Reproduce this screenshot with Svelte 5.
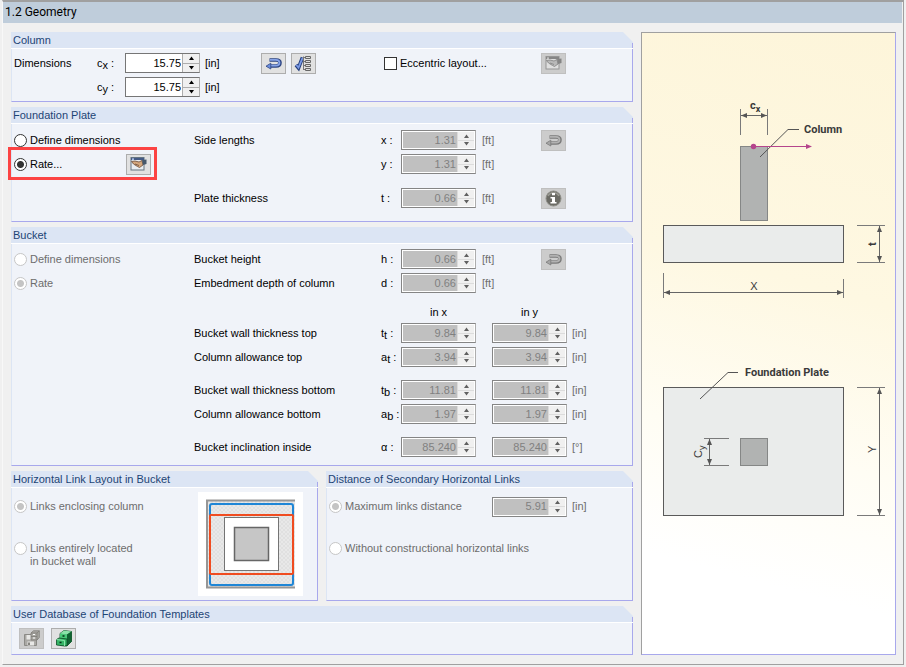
<script>
  let values = $state({
    cx: '15.75', cy: '15.75',
    x: '1.31', y: '1.31', t: '0.66',
    h: '0.66', d: '0.66',
    ttx: '9.84', tty: '9.84',
    atx: '3.94', aty: '3.94',
    tbx: '11.81', tby: '11.81',
    abx: '1.97', aby: '1.97',
    ax: '85.240', ay: '85.240',
    dist: '5.91'
  });
  let plateMode = $state('rate');
  let eccentric = $state(false);

  const wallRows = [
    [
      { label: 'Bucket wall thickness top', base: 't', sub: 't', unit: '[in]', keys: ['ttx', 'tty'] },
      { label: 'Column allowance top', base: 'a', sub: 't', unit: '[in]', keys: ['atx', 'aty'] }
    ],
    [
      { label: 'Bucket wall thickness bottom', base: 't', sub: 'b', unit: '[in]', keys: ['tbx', 'tby'] },
      { label: 'Column allowance bottom', base: 'a', sub: 'b', unit: '[in]', keys: ['abx', 'aby'] }
    ],
    [
      { label: 'Bucket inclination inside', base: 'α', sub: '', unit: '[°]', keys: ['ax', 'ay'] }
    ]
  ];

  function step(key, delta) {
    const decimals = values[key].split('.')[1]?.length ?? 0;
    values[key] = (parseFloat(values[key]) + delta).toFixed(decimals);
  }
</script>

{#snippet spin(key, name, disabled = false)}
  <div class="spin" class:disabled>
    <input id={key} type="text" inputmode="decimal" aria-label={name} bind:value={values[key]} {disabled} />
    <div class="arrows">
      <button type="button" aria-label="Increase {name}" {disabled} onclick={() => step(key, 0.01)}>
        <svg width="7" height="4" viewBox="0 0 7 4"><path d="M1 4L3.500 .5L6 4Z" fill="currentColor" /></svg>
      </button>
      <button type="button" aria-label="Decrease {name}" {disabled} onclick={() => step(key, -0.01)}>
        <svg width="7" height="4" viewBox="0 0 7 4"><path d="M1 0L3.500 3.500L6 0Z" fill="currentColor" /></svg>
      </button>
    </div>
  </div>
{/snippet}

{#snippet symbol(key, base, sub = '')}
  <label class="symbol" for={key}>{base}{#if sub}<sub>{sub}</sub>{/if} :</label>
{/snippet}

{#snippet pickIcon()}
  <svg width="17" height="13" viewBox="0 0 17 13" fill="none">
    <path d="M4.500 3H11C14 3 15 4.300 15 5.800C15 7.800 13.500 9 11 9H5" stroke="#2c4480" stroke-width="3.600" />
    <path d="M5 2.800H11C13.500 2.800 14.500 4.200 14.500 5.700C14.500 7.500 13 8.600 11 8.600H5" stroke="#86a3e8" stroke-width="1.800" />
    <path d="M5.800 6.200V12L1 9.200Z" fill="#6d8fdf" stroke="#2c4480" stroke-width=".8" />
  </svg>
{/snippet}

{#snippet treeIcon()}
  <svg width="19" height="17" viewBox="0 0 19 17" fill="none">
    <path d="M2 10L4.500 13L8.500 2.500" stroke="#26407e" stroke-width="3.600" />
    <path d="M2.300 10L4.500 12.500L8.500 3" stroke="#7b9ae6" stroke-width="1.800" />
    <path d="M9.500 1.500V15M9.500 2.500H12M9.500 6.500H12M9.500 10.500H12M9.500 14.500H12" stroke="#777" />
    <path d="M11.500 1.500h5v2h-5zM11.500 5.500h5v2h-5zM11.500 9.500h5v2h-5zM11.500 13.500h5v2h-5z" fill="#ddd" stroke="#666" />
  </svg>
{/snippet}

{#snippet handIcon()}
  <svg width="17" height="14" viewBox="0 0 17 14">
    <rect x="1" y=".5" width="13" height="12.500" fill="#e9edf0" stroke="#657481" />
    <path d="M1 1H14V3H1Z" fill="#445a85" />
    <path d="M2 1.500H4V2.800H2Z" fill="#cbdcff" />
    <path d="M1.500 4.500L5 4L9 5L12 3.500L13 8L9.500 10.500L7.500 9.500L3.500 7Z" fill="#d4a77c" stroke="#6b4b37" stroke-width=".8" />
    <path d="M5 7L9 8.500" stroke="#6b4b37" stroke-width=".8" fill="none" />
    <path d="M12 3L16.500 2.500V7L13 8Z" fill="#46586b" />
  </svg>
{/snippet}

{#snippet infoIcon()}
  <svg class="solid" width="17" height="17" viewBox="0 0 17 17">
    <circle cx="8.500" cy="8.500" r="7.500" fill="#6b6b65" stroke="#8f8f89" />
    <path d="M3 6C5 1.500 12 1.500 14 6" fill="none" stroke="#9b9b94" stroke-width="1.500" />
    <path d="M7 3H10V5.300H7ZM5.500 7H10V12H11.500V13.500H5.500V12H7V8.500H5.500Z" fill="#fff" />
  </svg>
{/snippet}

{#snippet saveIcon()}
  <svg class="solid" width="17" height="17" viewBox="0 0 17 17">
    <path d="M1.500 4.500H12L13.500 6V15.500H1.500Z" fill="#aaa9a5" stroke="#8b8a86" />
    <path d="M3.500 5H11V9.500H3.500ZM4.500 11.500H11V15.500H4.500Z" fill="#e8e8e6" />
    <path d="M5 12.500H7V15H5Z" fill="#85847f" />
    <path d="M8 3L10.500 .8H16.300V7.500L14 10H8Z" fill="#a9a8a3" stroke="#7d7c77" stroke-width=".8" />
    <path d="M8 3H14V10M14 3L16.300 .8M8 6.500H14" fill="none" stroke="#7d7c77" stroke-width=".8" />
    <path d="M10 4.500H12M10 8H12" stroke="#fff" />
  </svg>
{/snippet}

{#snippet cabinetIcon()}
  <svg width="18" height="17" viewBox="0 0 18 17">
    <path d="M5 3.500L9 .5L16.500 1.500V11.500L12 16L5 15Z" fill="#1f8f4c" stroke="#0b4a23" stroke-width=".8" />
    <path d="M5 3.500L12 4.500V9L5 8.500Z" fill="#48c978" />
    <path d="M5 3.500L9 .5L16.500 1.500L12 4.500Z" fill="#8be3a9" />
    <path d="M12 4.500L16.500 1.500V11.500L12 16Z" fill="#116332" />
    <path d="M1.500 9.500L4 8L12 9V15.500L9.500 16L1.500 15Z" fill="#36b566" stroke="#0b4a23" stroke-width=".8" />
    <path d="M1.500 9.500L9.500 10.500V16" fill="none" stroke="#9df0ba" stroke-width=".8" />
    <path d="M7.500 6H9.500M4.500 12.500H6.500" stroke="#052d14" stroke-width="1.500" />
  </svg>
{/snippet}

<main class="window">
  <h1>1.2 Geometry</h1>
  <div class="content">
    <div class="groups">
      <section class="group">
        <h2>Column</h2>
        <div class="body column-body">
          <div class="row">
            <span class="dim">Dimensions</span>
            {@render symbol('cx', 'c', 'x')}
            {@render spin('cx', 'column width in x')}
            <span class="unit">[in]</span>
            <div class="tools">
              <button class="tool" type="button" aria-label="Pick dimensions">{@render pickIcon()}</button>
              <button class="tool" type="button" aria-label="Select from list">{@render treeIcon()}</button>
            </div>
            <label class="choice ecc"><input type="checkbox" bind:checked={eccentric} />Eccentric layout...</label>
            <button class="tool" type="button" aria-label="Edit eccentric layout" disabled={!eccentric}>{@render handIcon()}</button>
          </div>
          <div class="row">
            <span class="dim"></span>
            {@render symbol('cy', 'c', 'y')}
            {@render spin('cy', 'column width in y')}
            <span class="unit">[in]</span>
          </div>
        </div>
      </section>

      <section class="group">
        <h2>Foundation Plate</h2>
        <div class="body split plate-body">
          <div class="options">
            <div class="row"><label class="choice"><input type="radio" name="plate" value="define" bind:group={plateMode} />Define dimensions</label></div>
            <div class="row marked">
              <label class="choice"><input type="radio" name="plate" value="rate" bind:group={plateMode} />Rate...</label>
              <button class="tool" type="button" aria-label="Edit rating settings">{@render handIcon()}</button>
            </div>
          </div>
          <div class="fields">
            <div class="stack">
              <div class="row">
                <span class="name">Side lengths</span>
                {@render symbol('x', 'x')}
                {@render spin('x', 'side length x', true)}
                <span class="unit off">[ft]</span>
                <button class="tool" type="button" aria-label="Pick side lengths" disabled>{@render pickIcon()}</button>
              </div>
              <div class="row">
                <span class="name"></span>
                {@render symbol('y', 'y')}
                {@render spin('y', 'side length y', true)}
                <span class="unit off">[ft]</span>
              </div>
            </div>
            <div class="stack">
              <div class="row">
                <span class="name">Plate thickness</span>
                {@render symbol('t', 't')}
                {@render spin('t', 'plate thickness', true)}
                <span class="unit off">[ft]</span>
                <button class="tool" type="button" aria-label="Plate information" disabled>{@render infoIcon()}</button>
              </div>
            </div>
          </div>
        </div>
      </section>

      <section class="group">
        <h2>Bucket</h2>
        <div class="body split bucket-body">
          <div class="options">
            <div class="row"><label class="choice"><input type="radio" name="bucket" disabled />Define dimensions</label></div>
            <div class="row"><label class="choice"><input type="radio" name="bucket" checked disabled />Rate</label></div>
          </div>
          <div class="fields">
            <div class="stack">
              <div class="row">
                <span class="name">Bucket height</span>
                {@render symbol('h', 'h')}
                {@render spin('h', 'bucket height', true)}
                <span class="unit off">[ft]</span>
                <button class="tool" type="button" aria-label="Pick bucket height" disabled>{@render pickIcon()}</button>
              </div>
              <div class="row">
                <span class="name">Embedment depth of column</span>
                {@render symbol('d', 'd')}
                {@render spin('d', 'embedment depth', true)}
                <span class="unit off">[ft]</span>
              </div>
            </div>
            {#each wallRows as rows, i}
              <div class="stack">
                {#if i === 0}
                  <div class="row heads">
                    <span class="name"></span>
                    <span class="head">in x</span>
                    <span class="head">in y</span>
                  </div>
                {/if}
                {#each rows as row}
                  <div class="row">
                    <span class="name">{row.label}</span>
                    {@render symbol(row.keys[0], row.base, row.sub)}
                    <div class="pair">
                      {@render spin(row.keys[0], row.label + ' in x', true)}
                      {@render spin(row.keys[1], row.label + ' in y', true)}
                    </div>
                    <span class="unit off">{row.unit}</span>
                  </div>
                {/each}
              </div>
            {/each}
          </div>
        </div>
      </section>

      <div class="halves">
        <section class="group">
          <h2>Horizontal Link Layout in Bucket</h2>
          <div class="body link-body">
            <div class="link-options">
              <label class="choice"><input type="radio" name="layout" checked disabled />Links enclosing column</label>
              <label class="choice"><input type="radio" name="layout" disabled /><span>Links entirely located<br />in bucket wall</span></label>
            </div>
            <svg class="links" width="105" height="104" viewBox="0 0 105 104" fill="none" role="img" aria-label="Links enclosing the column">
              <defs>
                <pattern id="hatch" width="4" height="4" patternUnits="userSpaceOnUse">
                  <rect width="4" height="4" fill="#e8e8e8" />
                  <path d="M0 0L4 4M4 0L0 4" stroke="#dcdcdc" stroke-width=".7" />
                </pattern>
              </defs>
              <rect width="105" height="104" fill="#fff" />
              <rect x="9" y="9" width="88" height="87" fill="url(#hatch)" />
              <path d="M97 8.500H9V95.500H97" stroke="#969696" stroke-width="2" />
              <rect x="12" y="12" width="83" height="81" rx="2" stroke="#1f86d6" stroke-width="2" />
              <rect x="12" y="23" width="83" height="59" rx="1" stroke="#f04c20" stroke-width="2" />
              <rect x="26.500" y="25.500" width="54" height="53" fill="#fff" stroke="#747474" />
              <rect x="36.500" y="35.500" width="34" height="33" fill="#c6c6c6" stroke="#666" stroke-width="1.500" />
            </svg>
          </div>
        </section>
        <section class="group">
          <h2>Distance of Secondary Horizontal Links</h2>
          <div class="body link-body">
            <div class="link-options">
              <div class="row">
                <label class="choice dist"><input type="radio" name="spacing" checked disabled />Maximum links distance</label>
                {@render spin('dist', 'maximum links distance', true)}
                <span class="unit off">[in]</span>
              </div>
              <label class="choice"><input type="radio" name="spacing" disabled />Without constructional horizontal links</label>
            </div>
          </div>
        </section>
      </div>

      <section class="group">
        <h2>User Database of Foundation Templates</h2>
        <div class="body db-body">
          <button class="tool" type="button" aria-label="Save template" disabled>{@render saveIcon()}</button>
          <button class="tool" type="button" aria-label="Open template database">{@render cabinetIcon()}</button>
        </div>
      </section>
    </div>

    <div class="preview">
      <svg viewBox="642 33 253 621" role="img" aria-label="Foundation sketch">
        <defs>
          <marker id="tip" viewBox="0 0 6 5" refX="6" refY="2.500" markerWidth="6" markerHeight="5" markerUnits="userSpaceOnUse" orient="auto-start-reverse">
            <path d="M0 0L6 2.500L0 5Z" fill="#555" />
          </marker>
        </defs>
        <g fill="none" stroke="#7a7a7a">
          <rect x="740.500" y="146.500" width="27" height="74" fill="#b1b3b2" stroke="#858786" />
          <rect x="663.500" y="225.500" width="180" height="37" fill="#eaeceb" stroke="#5a5a5a" />
          <rect x="663.500" y="387.500" width="180" height="128" fill="#eaeceb" stroke="#5a5a5a" />
          <rect x="740.500" y="438.500" width="27" height="27" fill="#b1b3b2" stroke="#858786" />
          <path d="M740.500 109V135M767.500 109V135M663.500 273V298M843.500 279V298" />
          <path d="M857 225.500H885M857 262.500H885M857 387.500H885M857 515.500H885M704 438.500H729M704 465.500H729" />
          <path d="M760 157L788 129.500H799M700 399L728 372.500H738" stroke="#555" />
        </g>
        <g stroke="#666">
          <path d="M741 115.500H767" marker-start="url(#tip)" marker-end="url(#tip)" />
          <path d="M664 292.500H843" marker-start="url(#tip)" marker-end="url(#tip)" />
          <path d="M879.500 226V262" marker-start="url(#tip)" marker-end="url(#tip)" />
          <path d="M879.500 388V515" marker-start="url(#tip)" marker-end="url(#tip)" />
          <path d="M709.500 439V465" marker-start="url(#tip)" marker-end="url(#tip)" />
        </g>
        <g fill="#b5458c">
          <path d="M754 146.500H807" stroke="#b5458c" />
          <circle cx="753.500" cy="146.500" r="2.700" />
          <path d="M806 144L812 146.500L806 149Z" />
        </g>
        <g class="marks">
          <text x="750" y="109">c<tspan dy="3" font-size="9">x</tspan></text>
          <text x="804" y="133">Column</text>
          <text x="745" y="376">Foundation Plate</text>
          <text x="754" y="290" text-anchor="middle" class="thin">X</text>
          <text transform="translate(876 246) rotate(-90)">t</text>
          <text transform="translate(876 453) rotate(-90)" class="thin">Y</text>
          <text transform="translate(702 458) rotate(-90)" class="thin">C<tspan dy="3" font-size="9">y</tspan></text>
        </g>
      </svg>
    </div>
  </div>
</main>

<style>
  :global(body) {
    background: #f0f0f0;
  }
  .window {
    margin: 0 2px;
    border: 1px solid #a0a0a0;
    border-top-width: 2px;
    border-left-color: #f8f8f8;
    background: #f0f0f0;
    font: 11px/13px "Liberation Sans", Arial, sans-serif;
    color: #000;
  }
  h1 {
    margin: 0 1px 0 0;
    padding: 0 2px;
    background: #bfcddb;
    font: 12px/21px Roboto, sans-serif;
  }
  .content {
    display: grid;
    grid-template-columns: minmax(0, 622fr) minmax(0, 255fr);
    gap: 8px;
    padding: 9px 7px 9px 8px;
  }
  .groups {
    display: flex;
    flex-direction: column;
    gap: 5px;
  }
  h2 {
    margin: 0;
    padding: 0 2px;
    border-bottom: 1px solid #fff;
    background: linear-gradient(#a8a8ec, #a8a8ec) right bottom / 1px 6px no-repeat border-box, #dce5f4;
    clip-path: polygon(0 0, calc(100% - 10px) 0, 100% 10px, 100% 100%, 0 100%);
    font-size: 11px;
    line-height: 16px;
    font-weight: normal;
    color: #1c4474;
  }
  .group {
    display: flex;
    flex-direction: column;
  }
  .body {
    flex: 1;
    border: solid #a8a8ec;
    border-width: 0 1px 1px 0;
    border-left: 1px solid #dce5f4;
    background: #f0f3f9;
  }
  .row {
    display: flex;
    align-items: center;
    height: 24px;
  }
  .column-body {
    padding: 2px;
  }
  .dim {
    width: 83px;
  }
  .column-body .symbol {
    width: 28px;
  }
  .column-body .unit {
    width: 61px;
  }
  .tools {
    display: flex;
    gap: 5px;
    width: 123px;
  }
  .ecc {
    width: 157px;
  }
  .split {
    display: flex;
    padding-left: 2px;
  }
  .options {
    width: 180px;
  }
  .options .row {
    width: 137px;
    justify-content: space-between;
  }
  .marked {
    position: relative;
  }
  .marked::after {
    content: "";
    position: absolute;
    inset: -5px -6px -4px;
    border: 3px solid #fc4343;
    pointer-events: none;
  }
  .fields {
    display: flex;
    flex-direction: column;
  }
  .plate-body {
    padding-top: 4px;
    padding-bottom: 11px;
  }
  .plate-body .fields {
    gap: 10px;
  }
  .bucket-body {
    padding-top: 3px;
    padding-bottom: 6px;
  }
  .bucket-body .fields {
    gap: 9px;
  }
  .name {
    width: 187px;
  }
  .symbol {
    width: 20px;
    white-space: nowrap;
  }
  sub {
    font-size: 11px;
    line-height: 0;
    vertical-align: -2px;
  }
  .unit {
    width: 60px;
    padding-left: 5px;
    box-sizing: border-box;
  }
  .fields .unit {
    width: 65px;
  }
  .fields .spin + .unit {
    padding-left: 6px;
  }
  .off {
    color: #6d6d6d;
  }
  .pair {
    display: flex;
    gap: 16px;
  }
  .heads {
    height: 17px;
    gap: 16px;
  }
  .head {
    width: 75px;
    text-align: center;
  }
  .heads .name {
    width: 191px;
  }
  .spin {
    display: flex;
    flex: none;
    width: 75px;
    height: 20px;
    box-sizing: border-box;
    border: 1px solid #767676;
    border-right-color: #adadad;
    background: #fff;
  }
  .spin input {
    flex: 1;
    min-width: 0;
    padding: 0 1px 0 0;
    border: 0;
    background: #fff;
    font: inherit;
    text-align: right;
    color: #000;
  }
  .arrows {
    display: flex;
    flex-direction: column;
    width: 16px;
    border-left: 1px solid #adadad;
    color: #000;
  }
  .arrows button {
    flex: 1;
    display: flex;
    align-items: center;
    justify-content: center;
    padding: 0;
    border: 0;
    background: #f0f0f0;
    color: inherit;
  }
  .arrows button + button {
    border-top: 1px solid #adadad;
  }
  .spin.disabled {
    padding: 1px;
    border-color: #858585;
    border-right-color: #adadad;
  }
  .disabled input {
    background: #c0c0c0;
    color: #808080;
  }
  .disabled .arrows {
    border-color: #dcdcdc;
    color: #606060;
  }
  .disabled .arrows button + button {
    border-color: #dcdcdc;
  }
  .tool {
    display: flex;
    align-items: center;
    justify-content: center;
    width: 25px;
    height: 21px;
    padding: 0;
    border: 1px solid #adadad;
    background: #e1e1e1;
  }
  .tool:disabled {
    border-color: #bfbfbf;
    background: #cccccc;
  }
  .tool:disabled svg:not(.solid) {
    filter: grayscale(1);
    opacity: 0.6;
  }
  .choice {
    display: flex;
    align-items: flex-start;
    gap: 3px;
  }
  .choice input {
    appearance: none;
    flex: none;
    width: 13px;
    height: 13px;
    margin: 0;
    border: 1px solid #333;
    background: #fff;
  }
  .choice input[type="radio"] {
    border-radius: 50%;
  }
  .choice input:checked {
    background: radial-gradient(circle, #333 3px, #fff 4px);
  }
  .choice:has(input:disabled) {
    color: #6d6d6d;
  }
  .choice input:disabled {
    border-color: #c6c6c6;
  }
  .choice input:disabled:checked {
    background: radial-gradient(circle, #c4c4c4 3px, #fff 4px);
  }
  .halves {
    display: grid;
    grid-template-columns: minmax(0, 1fr) minmax(0, 1fr);
    gap: 8px;
  }
  .link-body {
    display: flex;
    justify-content: space-between;
    min-height: 104px;
    padding: 4px 14px 4px 2px;
  }
  .link-options {
    display: flex;
    flex-direction: column;
    gap: 29px;
    padding-top: 8px;
  }
  .link-options .row {
    height: 13px;
  }
  .dist {
    width: 163px;
  }
  .links {
    flex: none;
  }
  .db-body {
    display: flex;
    gap: 7px;
    padding: 5px 7px;
  }
  .preview {
    border: 1px solid #a0a0a0;
    border-right-color: #a8a8ec;
    border-bottom-color: #a8a8ec;
    background: linear-gradient(195deg, #fdf5da 0%, #fef8e2 40%, #fffdf4 65%, #fff 85%);
  }
  .preview svg {
    display: block;
    width: 100%;
  }
  .marks {
    font-family: Roboto, sans-serif;
    font-size: 11px;
    font-weight: bold;
    fill: #3a3a3a;
  }
  .thin {
    font-family: "Liberation Sans", Arial, sans-serif;
    font-weight: normal;
  }
</style>
